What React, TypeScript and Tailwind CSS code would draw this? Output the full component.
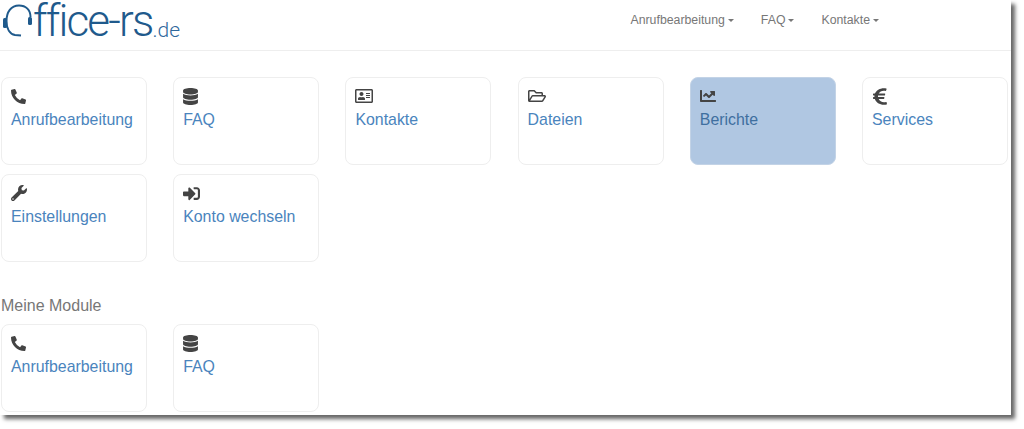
import { FaChartLine, FaDatabase, FaEuroSign, FaPhoneAlt, FaRegAddressCard, FaRegFolderOpen, FaSignInAlt, FaWrench } from "react-icons/fa";
import type { ComponentType } from "react";

type Tile = { label: string; icon: ComponentType<{ className?: string }>; iconClass: string; active?: boolean };

// the euro in the picture is wider than this one's own proportions
const EuroIcon = ({ className }: { className?: string }) => <FaEuroSign className={className} preserveAspectRatio="none" />;

const modules: Tile[] = [
  { label: "Anrufbearbeitung", icon: FaPhoneAlt, iconClass: "w-[15px] h-[15px]" },
  { label: "FAQ", icon: FaDatabase, iconClass: "w-[15px] h-[17px]" },
  { label: "Kontakte", icon: FaRegAddressCard, iconClass: "w-[18px] h-[18px]" },
  { label: "Dateien", icon: FaRegFolderOpen, iconClass: "w-[18px] h-[18px]" },
  { label: "Berichte", icon: FaChartLine, iconClass: "w-[16px] h-[16px]", active: true },
  { label: "Services", icon: EuroIcon, iconClass: "w-[14px] h-[19px] ml-px" },
  { label: "Einstellungen", icon: FaWrench, iconClass: "w-[16px] h-[16px]" },
  { label: "Konto wechseln", icon: FaSignInAlt, iconClass: "w-[17px] h-[17px]" },
];

const mine = modules.slice(0, 2);

function ModuleTile({ tile }: { tile: Tile }) {
  const Icon = tile.icon;
  return (
    <a
      className={`block h-[88px] rounded-[8px] border px-[9px] pt-[8px] ${
        tile.active ? "border-[#c3d3e6] bg-[#b0c7e2] text-[#3f6f9f]" : "border-[#eeeeee] bg-white text-[#4a84bd]"
      }`}
    >
      <div className="flex h-[20px] items-center text-[#444444]">
        <Icon className={tile.iconClass} />
      </div>
      <div className="mt-[3px] text-[15.9px] leading-[22px]">{tile.label}</div>
    </a>
  );
}

function NavItem({ label }: { label: string }) {
  return (
    <span className="flex items-center gap-[3px] text-[12.3px] text-[#777777]">
      {label}
      <span className="mt-[1px] h-0 w-0 border-x-[3px] border-t-[3px] border-x-transparent border-t-[#777777]" />
    </span>
  );
}

function Logo() {
  return (
    <div className="flex items-end text-[#1f5a8c]">
      <svg width="33" height="42" viewBox="0 0 33 42" fill="none" className="shrink-0">
        <path d="M30.5 17 C30.5 10 26 5.5 19 5.5 C11 5.5 6.5 12 6.5 21 C6.5 29 10 34 15 35 L21 35.5" stroke="#1f5a8c" strokeWidth="2" />
        <rect x="3" y="18" width="4" height="10" rx="1.5" fill="#1f5a8c" />
        <rect x="28" y="17" width="4" height="8" rx="1.5" fill="#1f5a8c" />
      </svg>
      <span className="text-[44px] font-light leading-[42px] tracking-[-1.85px] font-['Roboto',sans-serif]">ffice-rs</span>
      <span className="mb-[1.5px] text-[21px] font-light leading-[22px] text-[#2f689c] font-['Roboto',sans-serif]">.de</span>
    </div>
  );
}

export default function App() {
  return (
    <div className="h-[429px] w-[1024px] overflow-hidden bg-white font-['Liberation_Sans',Arial,sans-serif]">
      <div className="h-[415px] w-[1011px] bg-white shadow-[4px_4px_4px_#666666]">
        <header className="flex h-[51px] items-start justify-between border-b border-[#eeeeee]">
          <Logo />
          <nav className="mr-[132px] flex gap-[27px] pt-[11px]">
            <NavItem label="Anrufbearbeitung" />
            <NavItem label="FAQ" />
            <NavItem label="Kontakte" />
          </nav>
        </header>
        <main className="pl-px pt-[26px]">
          <div className="grid w-[1007px] grid-cols-6 gap-x-[26.2px] gap-y-[9px]">
            {modules.map((tile) => (
              <ModuleTile key={tile.label} tile={tile} />
            ))}
          </div>
          <h2 className="mt-[34px] text-[16px] leading-[20px] text-[#777777]">Meine Module</h2>
          <div className="mt-[8px] grid w-[1007px] grid-cols-6 gap-x-[26.2px]">
            {mine.map((tile) => (
              <ModuleTile key={tile.label} tile={tile} />
            ))}
          </div>
        </main>
      </div>
    </div>
  );
}
